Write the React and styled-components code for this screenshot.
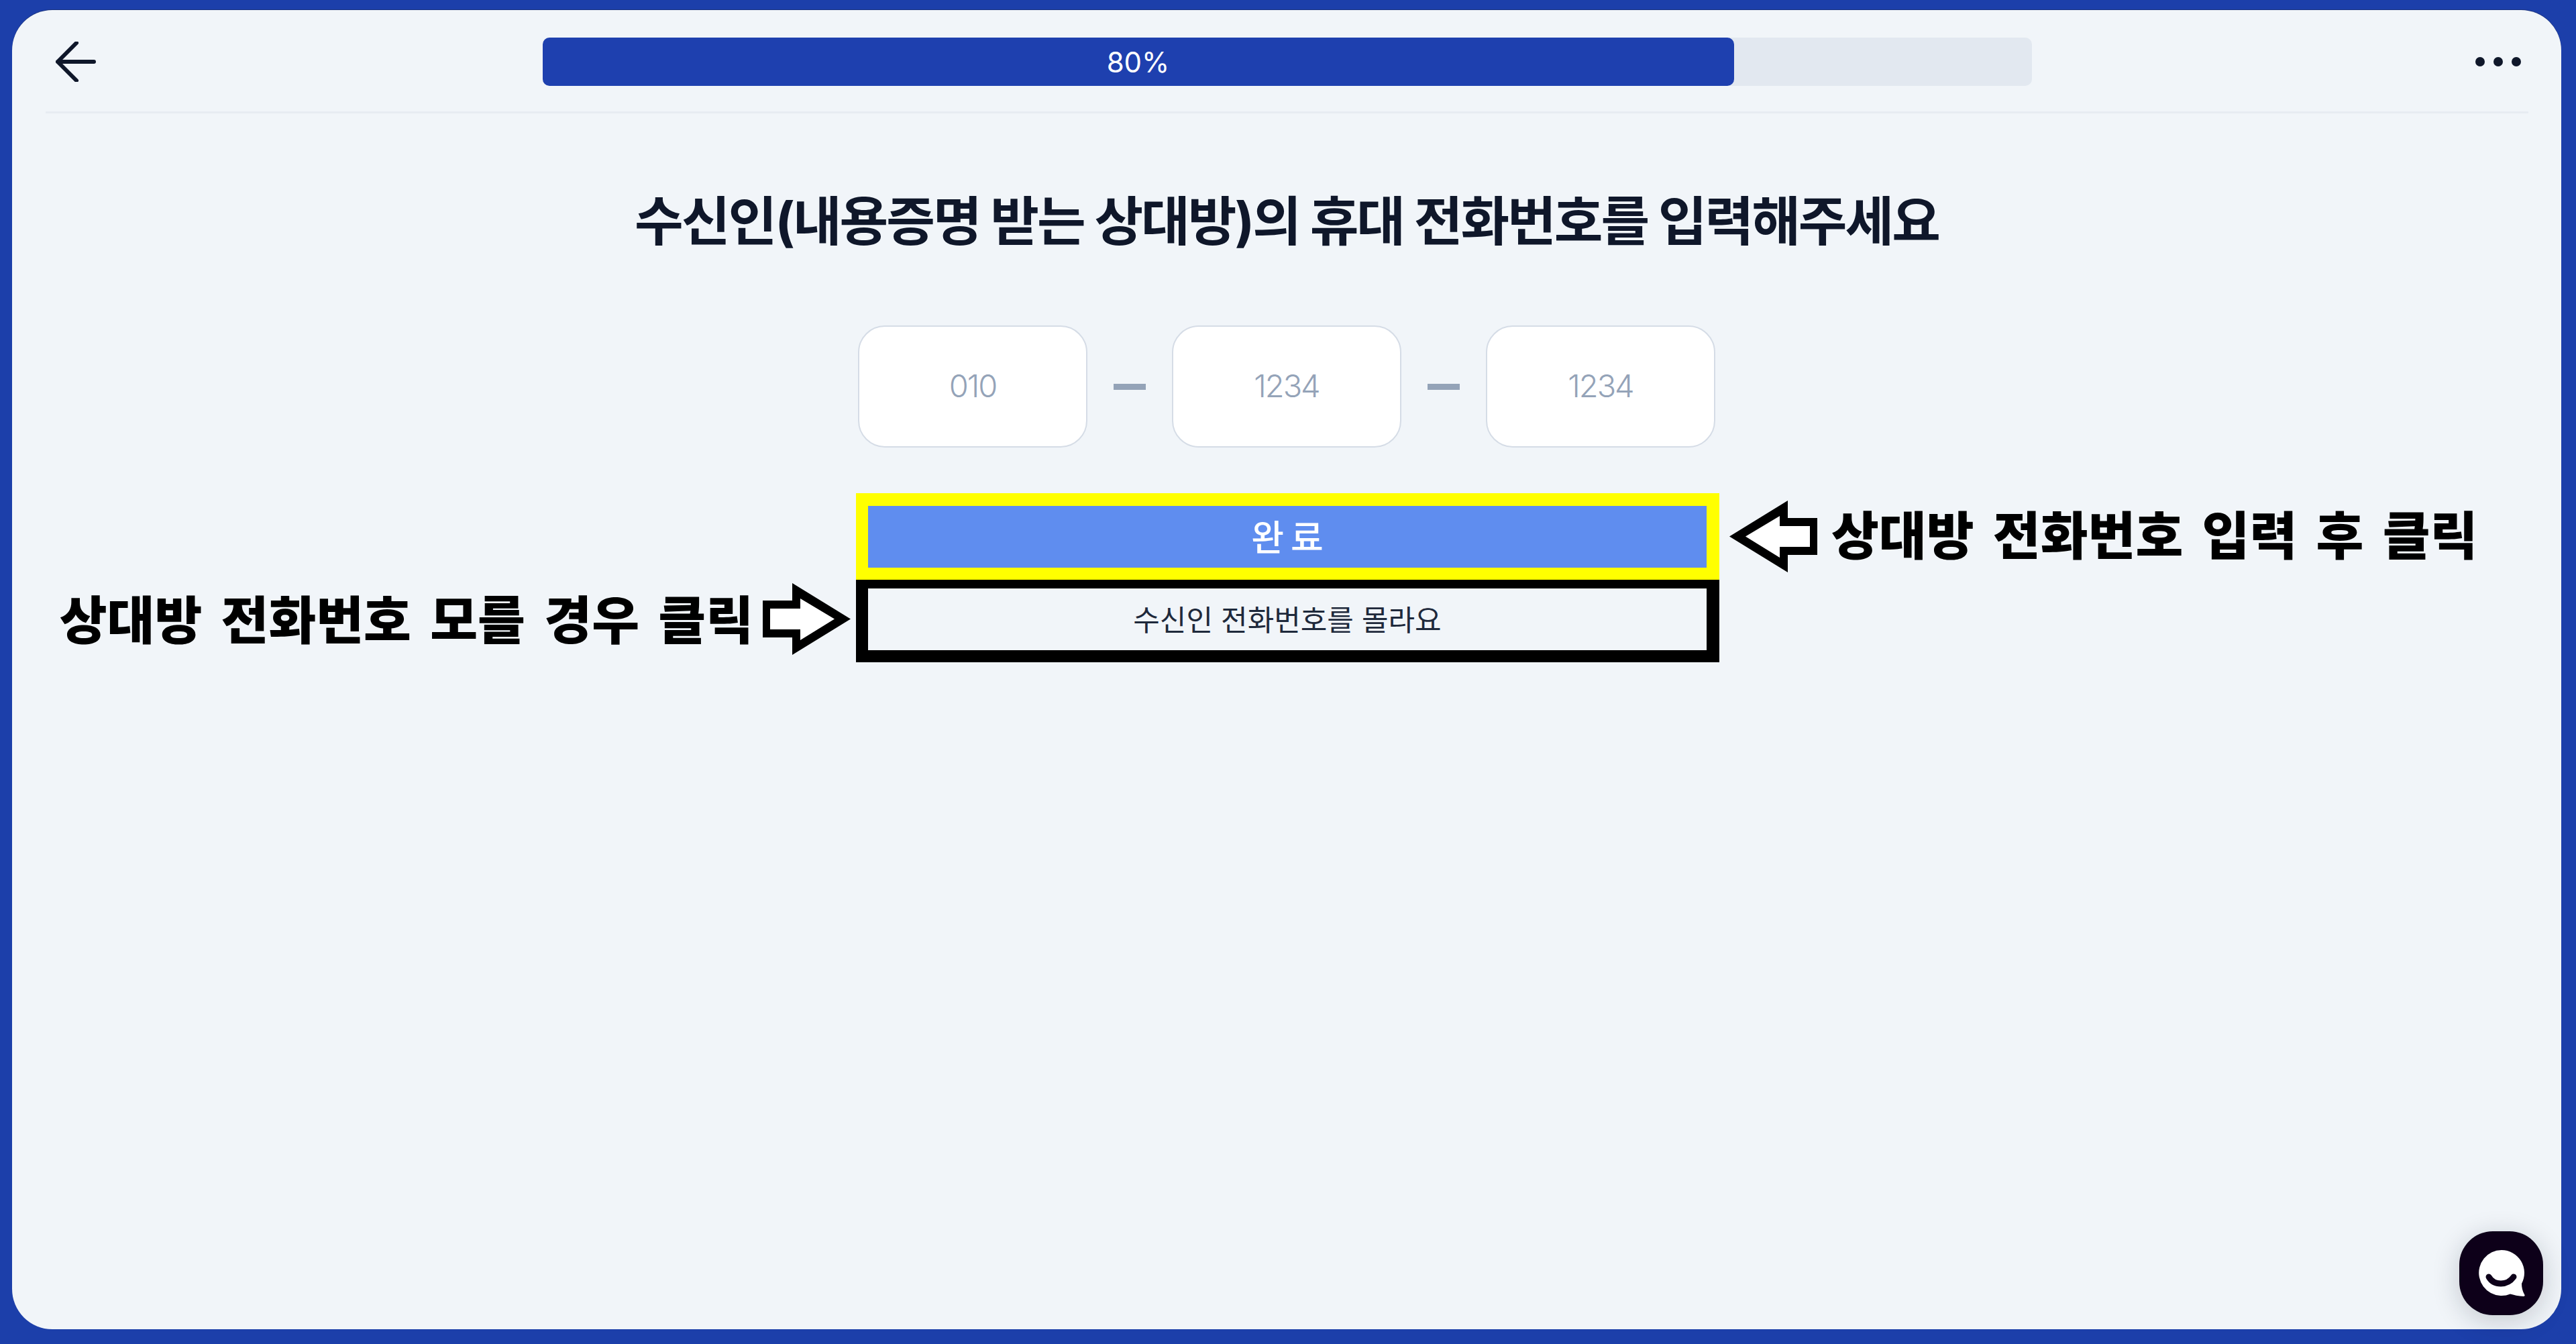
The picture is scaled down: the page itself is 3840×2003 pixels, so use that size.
import styled, { createGlobalStyle } from "styled-components";

const GlobalStyle = createGlobalStyle`
  html, body {
    margin: 0;
    padding: 0;
    background: #1c3faa;
  }

  * {
    box-sizing: border-box;
  }
`;

const Page = styled.div`
  height: 2003px;
  padding: 15px 22px 22px 18px;
  font-family: "Inter", "Noto Sans CJK KR", sans-serif;
`;

const Panel = styled.main`
  position: relative;
  height: 100%;
  display: flex;
  flex-direction: column;
  align-items: center;
  background: #f1f5f9;
  border-radius: 60px;
  box-shadow: 0 -1px 0 #1a337f;
`;

const Header = styled.header`
  align-self: stretch;
  height: 154px;
  margin: 0 49px 0 50px;
  padding-top: 3px;
  display: grid;
  grid-template-columns: 1fr 2220px 1fr;
  align-items: center;
  border-bottom: 3px solid #e7ecf2;
`;

const BackButton = styled.button`
  justify-self: start;
  margin-left: 15px;
  padding: 0;
  display: flex;
  background: none;
  border: none;
`;

const MoreButton = styled.button`
  justify-self: end;
  margin-right: 11px;
  padding: 0;
  display: flex;
  gap: 13px;
  background: none;
  border: none;
`;

const Dot = styled.span`
  width: 14px;
  height: 14px;
  border-radius: 50%;
  background: #0f172a;
`;

const Track = styled.div`
  height: 72px;
  border-radius: 10px;
  background: #e2e8f0;
`;

const Fill = styled.div`
  height: 100%;
  display: flex;
  align-items: center;
  justify-content: center;
  border-radius: 10px;
  background: #1e40af;
  color: #fff;
  font-size: 42px;
`;

const Title = styled.h1`
  margin: 111px 0 0;
  font-size: 79px;
  line-height: 100px;
  font-weight: 700;
  letter-spacing: -3px;
  color: #0f172a;
`;

const PhoneRow = styled.div`
  margin-top: 105px;
  display: flex;
  align-items: center;
  gap: 39px;
`;

const PhoneBox = styled.div`
  width: 342px;
  height: 182px;
  padding-bottom: 4px;
  display: flex;
  align-items: center;
  justify-content: center;
  background: #fff;
  border: 2px solid #d5dce6;
  border-radius: 40px;
  color: #94a3b8;
  font-size: 47px;
  font-weight: 300;
  letter-spacing: -2px;
`;

const Dash = styled.span`
  width: 48px;
  height: 9px;
  background: #94a3b8;
`;

const Actions = styled.div`
  margin-top: 68px;
  display: grid;
  grid-template-columns: 1258px 1287px 1255px;
  grid-template-rows: 129px 123px;
`;

const Frame = styled.div`
  grid-column: 2;
  display: flex;
  border-style: solid;
  border-color: ${(p) => p.$color};
  border-width: ${(p) => p.$top}px 19px 18px 18px;
`;

const DoneButton = styled.button`
  flex: 1;
  padding: 0 0 4px;
  background: #5f8def;
  border: none;
  color: #fff;
  font-family: inherit;
  font-size: 53px;
  font-weight: 500;
  word-spacing: -4px;
`;

const UnknownButton = styled.button`
  flex: 1;
  padding: 0 0 5px;
  background: #f1f5f9;
  border: none;
  color: #1e293b;
  font-family: inherit;
  font-size: 43px;
  font-weight: 400;
`;

const Note = styled.div`
  display: flex;
  align-items: center;
  color: #000;
  font-size: 77px;
  font-weight: 900;
  word-spacing: 13px;
  white-space: nowrap;
`;

const NoteText = styled.span`
  padding-bottom: ${(p) => p.$lift}px;
`;

const LeftNote = styled(Note)`
  grid-column: 1;
  grid-row: 2;
  justify-content: flex-end;
  gap: 14px;
  padding: 0 8px 7px 0;
`;

const RightNote = styled(Note)`
  grid-column: 3;
  grid-row: 1;
  gap: 21px;
  padding-left: 15px;
`;

const ChatButton = styled.button`
  position: absolute;
  right: 27px;
  bottom: 21px;
  width: 125px;
  height: 125px;
  padding: 0;
  display: flex;
  align-items: center;
  justify-content: center;
  background: #0d0019;
  border: none;
  border-radius: 50px;
  box-shadow: 0 8px 40px rgba(15, 23, 42, 0.2);
`;

const ArrowBack = () => (
  <svg width="60" height="60" viewBox="0 0 60 60" fill="none" stroke="#0f172a" strokeWidth="6" strokeLinecap="round" strokeLinejoin="round">
    <path d="M57 30H3M31 2 3 30l28 28" />
  </svg>
);

const NoteArrow = ({ flip }) => (
  <svg width="131" height="107" viewBox="0 0 131 107" style={flip ? { transform: "scaleX(-1)" } : undefined}>
    <path d="M0 53.500 87 0V26H131V81H87V107Z" fill="#000" />
    <path d="M24 53.500 75 23V38H120V69H75V85Z" fill="#fff" />
  </svg>
);

const ChatIcon = () => (
  <svg width="70" height="70" viewBox="0 0 70 70">
    <path d="M35 0a34 34 0 1 0 13 65.500c5 1.500 12 3 20 3.500 1 0 2-1 1.500-2C66 61 65 55 65 50A34 34 0 0 0 35 0Z" fill="#fff" />
    <path d="M16 40c4 7 11 10 18 10s14-3 19-10" fill="none" stroke="#0d0019" strokeWidth="9" strokeLinecap="round" />
  </svg>
);

export default function App() {
  return (
    <>
      <GlobalStyle />
      <Page>
        <Panel>
          <Header>
            <BackButton aria-label="뒤로">
              <ArrowBack />
            </BackButton>
            <Track>
              <Fill style={{ width: "80%" }}>80%</Fill>
            </Track>
            <MoreButton aria-label="더보기">
              <Dot />
              <Dot />
              <Dot />
            </MoreButton>
          </Header>
          <Title>수신인(내용증명 받는 상대방)의 휴대 전화번호를 입력해주세요</Title>
          <PhoneRow>
            <PhoneBox>010</PhoneBox>
            <Dash />
            <PhoneBox>1234</PhoneBox>
            <Dash />
            <PhoneBox>1234</PhoneBox>
          </PhoneRow>
          <Actions>
            <Frame $color="#ffff00" $top={19}>
              <DoneButton>완 료</DoneButton>
            </Frame>
            <RightNote>
              <NoteArrow />
              <NoteText $lift={12}>상대방 전화번호 입력 후 클릭</NoteText>
            </RightNote>
            <LeftNote>
              <NoteText $lift={6}>상대방 전화번호 모를 경우 클릭</NoteText>
              <NoteArrow flip />
            </LeftNote>
            <Frame $color="#000" $top={13}>
              <UnknownButton>수신인 전화번호를 몰라요</UnknownButton>
            </Frame>
          </Actions>
          <ChatButton aria-label="채팅">
            <ChatIcon />
          </ChatButton>
        </Panel>
      </Page>
    </>
  );
}
